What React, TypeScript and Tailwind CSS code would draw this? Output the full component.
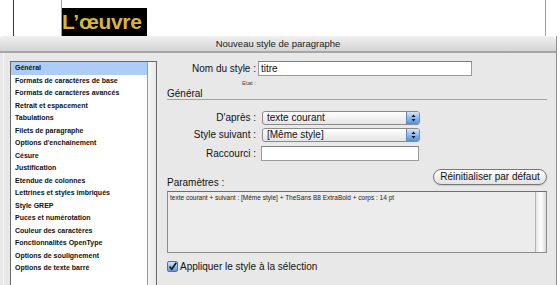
const items: string[] = [
  "Général",
  "Formats de caractères de base",
  "Formats de caractères avancés",
  "Retrait et espacement",
  "Tabulations",
  "Filets de paragraphe",
  "Options d'enchaînement",
  "Césure",
  "Justification",
  "Etendue de colonnes",
  "Lettrines et styles imbriqués",
  "Style GREP",
  "Puces et numérotation",
  "Couleur des caractères",
  "Fonctionnalités OpenType",
  "Options de soulignement",
  "Options de texte barré",
];

const Stepper = () => (
  <span className="w-[13px] h-full flex items-center justify-center border-l border-[#5f86c0] bg-linear-to-b from-[#d3e6fb] via-[#8dbaf0] to-[#4f8fe3]">
    <svg width="5" height="8" viewBox="0 0 5 8">
      <path d="M2.5 0.5 L4.5 3 L0.5 3 Z" fill="#111" />
      <path d="M2.5 7.5 L4.5 5 L0.5 5 Z" fill="#111" />
    </svg>
  </span>
);

const Select = ({ value }: { value: string }) => (
  <div className="ml-[6px] w-[158px] h-[14px] flex rounded-[3px] border border-[#8a8a8a] overflow-hidden bg-linear-to-b from-white to-[#e4e4e4]">
    <span className="flex-1 pl-[4px] text-[10px] leading-[12px] text-[#111]">{value}</span>
    <Stepper />
  </div>
);

const Label = ({ children }: { children: string }) => (
  <span className="w-[89px] text-right text-[10px] leading-[14px] text-[#111]">{children}</span>
);

export default function App() {
  return (
    <div className="w-[560px] h-[285px] overflow-hidden bg-white flex flex-col font-['Liberation_Sans',Arial,sans-serif]">
      {/* document behind the dialog */}
      <div className="h-[36px] shrink-0 flex">
        <div className="w-[13px]" />
        <div className="w-px bg-[#3a3a3a]" />
        <div className="w-[47px]" />
        <div className="w-px bg-[#a58cf0]" />
        <div className="pt-[8px]">
          <div className="w-[85px] h-[28px] bg-black text-[#d7b443] font-bold text-[21px] leading-[27px] tracking-[-0.3px]">
            L’œuvre
          </div>
        </div>
        <div className="flex-1" />
        <div className="w-px bg-[#a58cf0]" />
        <div className="w-[14px]" />
      </div>

      <div className="flex-1 flex min-h-0">
        <div className="w-[557px] flex flex-col border-r border-[#8e8e8e]">
          {/* title bar */}
          <div className="h-[17px] shrink-0 rounded-tr-[5px] rounded-tl-[3px] border-b-2 border-[#a6a6a6] bg-linear-to-b from-[#f0f0f0] to-[#d4d4d4] text-center text-[9.5px] leading-[15px] text-[#222]">
            Nouveau style de paragraphe
          </div>

          <div className="flex-1 flex items-start bg-[#e8e8e8] pl-[3px] min-h-0">
            <div className="self-stretch border-l border-[#f7f7f7] pl-[6px] pt-[8px]">
              {/* category list */}
              <div className="w-[147px] h-[240px] flex border border-[#6a6a6a] bg-white">
                <div className="w-[137px] border-r border-[#9a9a9a]">
                  {items.map((t, i) => (
                    <div
                      key={t}
                      className={
                        "h-[12.5px] pl-[4px] text-[7px] font-bold leading-[12.5px] text-[#111] whitespace-nowrap " +
                        (i === 0 ? "bg-[#aecdf6]" : "")
                      }
                    >
                      {t}
                    </div>
                  ))}
                </div>
                <div className="flex-1 bg-linear-to-r from-[#f6f6f6] to-[#e9e9e9]" />
              </div>
            </div>

            {/* settings */}
            <div className="ml-[10px] w-[380px] pt-[8px] flex flex-col">
              <div className="flex items-center h-[15px]">
                <Label>Nom du style :</Label>
                <div className="ml-[2px] w-[214px] h-[15px] border border-[#9a9a9a] border-t-[#7c7c7c] bg-white pl-[2px] text-[10px] leading-[13px] text-[#111]">
                  titre
                </div>
              </div>
              <div className="mt-[4px] w-[89px] text-right text-[6px] leading-[6px] text-[#444]">Etat :</div>
              <div className="mt-[2px] h-[12px] border-b border-[#a3a3a3] text-[10px] leading-[11px] text-[#111]">
                Général
              </div>

              <div className="mt-[11px] flex items-center h-[14px]">
                <Label>D'après :</Label>
                <Select value="texte courant" />
              </div>
              <div className="mt-[3px] flex items-center h-[14px]">
                <Label>Style suivant :</Label>
                <Select value="[Même style]" />
              </div>
              <div className="mt-[4px] flex items-center h-[15px]">
                <Label>Raccourci :</Label>
                <div className="ml-[5px] w-[158px] h-[15px] border border-[#9a9a9a] border-t-[#7c7c7c] bg-white" />
              </div>

              <div className="mt-[8px] h-[19px] flex justify-between">
                <span className="self-end text-[10px] leading-[10px] text-[#111]">Paramètres :</span>
                <button className="w-[114px] h-[16px] rounded-full border border-[#767676] bg-linear-to-b from-white to-[#e2e2e2] text-[10px] leading-[14px] text-[#111] shadow-[0_1px_1px_rgba(0,0,0,0.15)]">
                  Réinitialiser par défaut
                </button>
              </div>

              <div className="mt-[3px] h-[62px] flex border border-[#8c8c8c] border-t-[#6f6f6f] bg-[#ececec]">
                <div className="flex-1 pl-[2px] pt-[2px] text-[6.5px] leading-[8px] text-[#222]">
                  texte courant + suivant : [Même style] + TheSans B8 ExtraBold + corps : 14 pt
                </div>
                <div className="w-[11px] border-l border-[#b5b5b5] bg-linear-to-r from-[#e6e6e6] via-white to-[#d9d9d9]" />
              </div>

              <div className="mt-[8px] h-[11px] flex items-center">
                <span className="w-[11px] h-[11px] rounded-[2px] border border-[#4a73b5] bg-linear-to-b from-[#cfe3fb] to-[#5b98e6] flex items-center justify-center">
                  <svg width="9" height="9" viewBox="0 0 9 9">
                    <path d="M1.5 4.5 L3.8 7.2 L8.2 0.8" stroke="#111" strokeWidth="1.6" fill="none" />
                  </svg>
                </span>
                <span className="ml-[2px] text-[10px] leading-[11px] text-[#111]">Appliquer le style à la sélection</span>
              </div>
            </div>
          </div>
        </div>
        <div className="flex-1 bg-white" />
      </div>
    </div>
  );
}
